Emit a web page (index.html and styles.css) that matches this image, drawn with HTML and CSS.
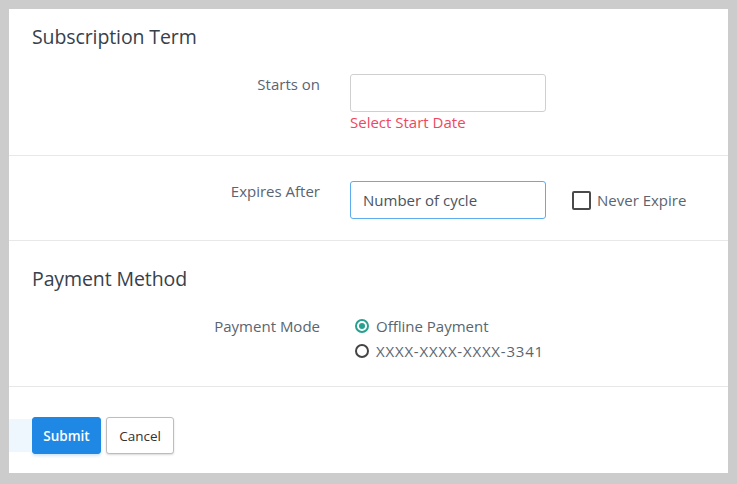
FILE: index.html
```html
<!DOCTYPE html>
<html>
<head>
<meta charset="utf-8">
<link rel="stylesheet" href="styles.css">
</head>
<body>
<div class="panel">
  <section class="sec sec-first">
    <h2 class="title">Subscription Term</h2>
    <div class="row row-start">
      <label class="lbl">Starts on</label>
      <div class="ctrl">
        <input class="field" type="text">
        <div class="err">Select Start Date</div>
      </div>
    </div>
  </section>
  <section class="sec sec-expire">
    <div class="row">
      <label class="lbl">Expires After</label>
      <div class="ctrl ctrl-inline">
        <input class="field field-focus" type="text" placeholder="Number of cycle">
        <label class="check"><span class="box"></span><span>Never Expire</span></label>
      </div>
    </div>
  </section>
  <section class="sec sec-pay">
    <h2 class="title">Payment Method</h2>
    <div class="row row-pay">
      <label class="lbl">Payment Mode</label>
      <div class="ctrl radios">
        <label class="radio"><span class="dot dot-on"></span><span>Offline Payment</span></label>
        <label class="radio"><span class="dot"></span><span class="card">XXXX-XXXX-XXXX-3341</span></label>
      </div>
    </div>
  </section>
  <footer class="foot">
    <button class="btn btn-primary">Submit</button>
    <button class="btn btn-default">Cancel</button>
  </footer>
</div>
</body>
</html>
```

FILE: styles.css
```css
html, body {
  margin: 0;
  padding: 0;
  background: #cccccc;
}
body {
  padding: 9px;
  width: 719px;
  font-family: "Open Sans", "Liberation Sans", sans-serif;
  color: #4a545e;
}
.panel {
  background: #ffffff;
  height: 464px;
  box-sizing: border-box;
}
.sec {
  border-bottom: 1px solid #e8e8e8;
  box-sizing: border-box;
}
.sec-first {
  padding-top: 16px;
  height: 147px;
}
.sec-expire {
  padding-top: 25px;
  height: 85px;
}
.sec-pay {
  padding-top: 26px;
  height: 146px;
}
.title {
  margin: 0 0 0 23px;
  font-size: 19.5px;
  line-height: 24px;
  font-weight: 400;
  color: #36414b;
  letter-spacing: -0.1px;
}
.row {
  display: grid;
  grid-template-columns: 311px auto;
  column-gap: 30px;
  align-items: start;
}
.row-start {
  margin-top: 25px;
}
.row-pay {
  margin-top: 25px;
}
.lbl {
  text-align: right;
  font-size: 15px;
  line-height: 20px;
  color: #5a6570;
}
.ctrl-inline {
  display: flex;
  align-items: center;
}
.field {
  display: block;
  width: 196px;
  height: 38px;
  box-sizing: border-box;
  border: 1px solid #cfcfcf;
  border-radius: 3px;
  padding: 0 12px;
  font-family: inherit;
  font-size: 15px;
  color: #4a545e;
  outline: none;
  margin: 0;
}
.field-focus {
  border-color: #5cacee;
}
.field::placeholder {
  color: #4a545e;
  opacity: 1;
}
.err {
  color: #f0475e;
  font-size: 15px;
  line-height: 20px;
}
.check {
  display: flex;
  align-items: center;
  margin-left: 26px;
  font-size: 15px;
  color: #5a6570;
}
.box {
  width: 19px;
  height: 19px;
  box-sizing: border-box;
  border: 2.5px solid #4a4a4a;
  border-radius: 2px;
  margin-right: 6px;
}
.radios {
  display: flex;
  flex-direction: column;
  gap: 5px;
  padding-left: 5px;
}
.radio {
  display: flex;
  align-items: center;
  font-size: 15px;
  line-height: 20px;
  color: #5a6570;
}
.card {
  letter-spacing: 0.8px;
}
.dot {
  width: 14px;
  height: 14px;
  box-sizing: border-box;
  border: 2px solid #444;
  border-radius: 50%;
  margin-right: 7px;
  position: relative;
}
.dot-on {
  border-color: #26a08f;
}
.dot-on::after {
  content: "";
  position: absolute;
  left: 2px;
  top: 2px;
  width: 6px;
  height: 6px;
  border-radius: 50%;
  background: #26a08f;
}
.foot {
  padding: 30px 0 0 23px;
  display: flex;
  gap: 5px;
}
.btn {
  height: 37px;
  border-radius: 3px;
  font-family: inherit;
  font-size: 13.5px;
  padding: 0;
  cursor: pointer;
}
.btn-primary {
  width: 69px;
  background: #1f88e4;
  color: #ffffff;
  border: 1px solid #1f88e4;
  font-weight: 600;
  box-shadow: -25px 0 0 -2px #eef7fe, 0 2px 3px rgba(31,136,228,0.2);
}
.btn-default {
  width: 68px;
  background: #ffffff;
  color: #333;
  border: 1px solid #bdbdbd;
  box-shadow: 0 1px 2px rgba(0,0,0,0.15);
}
```
